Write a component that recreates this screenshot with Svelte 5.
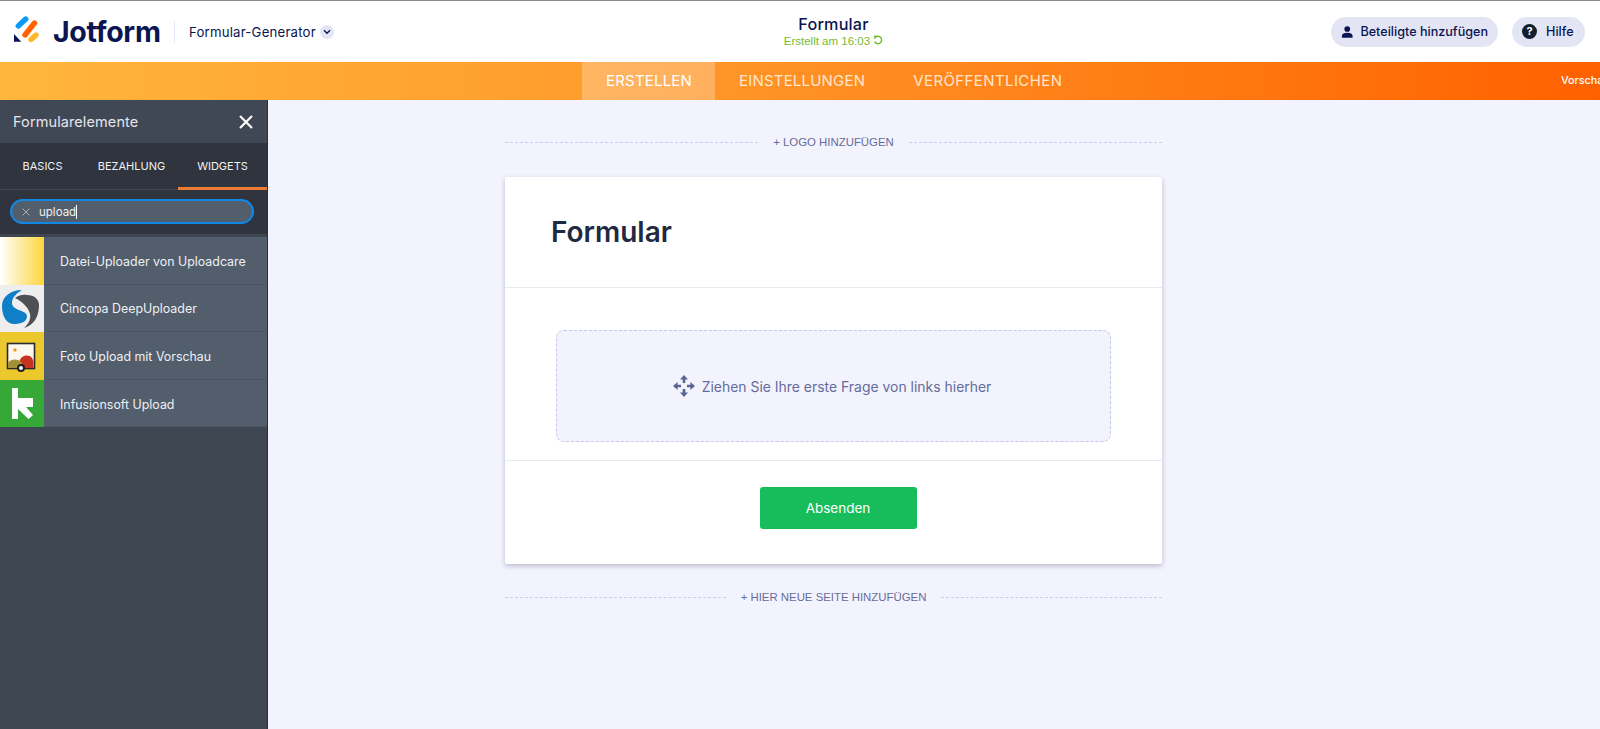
<script>
	const tabs = ['ERSTELLEN', 'EINSTELLUNGEN', 'VERÖFFENTLICHEN'];
	const sideTabs = ['BASICS', 'BEZAHLUNG', 'WIDGETS'];
	const widgets = [
		{ name: 'Datei-Uploader von Uploadcare', kind: 'care' },
		{ name: 'Cincopa DeepUploader', kind: 'cincopa' },
		{ name: 'Foto Upload mit Vorschau', kind: 'photo' },
		{ name: 'Infusionsoft Upload', kind: 'infusion' }
	];
</script>

<div class="page">
	<header class="top">
		<div class="brand">
			<svg class="logo" width="25" height="28" viewBox="0 0 25 28" fill="none" stroke-linecap="round" stroke-width="5.4">
				<line x1="4.3" y1="11" x2="11.7" y2="4" stroke="#0a9bf5" />
				<line x1="11" y1="20" x2="20.5" y2="8" stroke="#ff6100" />
				<line x1="17" y1="24.5" x2="22" y2="20" stroke="#ffb629" />
				<path d="M0 19 L7.3 26.7 H0 Z" fill="#0a1551" stroke="none" />
			</svg>
			<span class="wordmark">Jotform</span>
			<span class="divider"></span>
			<span class="generator">Formular-Generator</span>
			<span class="caret">
				<svg width="8" height="6" viewBox="0 0 8 6"><path d="M1 1.2 L4 4.2 L7 1.2" fill="none" stroke="#0a1551" stroke-width="1.4" /></svg>
			</span>
		</div>
		<div class="title">
			<div class="form-name">Formular</div>
			<div class="saved">
				Erstellt am 16:03
				<svg width="10" height="10" viewBox="0 0 10 10"><path d="M2.2 2.4 A3.7 3.7 0 1 1 1.6 6.6" fill="none" stroke="#78bb30" stroke-width="1.5" /><path d="M0.8 0.6 L4.6 1 L1.4 4.2 Z" fill="#78bb30" /></svg>
			</div>
		</div>
		<div class="actions">
			<button class="pill invite">
				<svg width="14" height="14" viewBox="0 0 14 14"><circle cx="7" cy="3.6" r="3.2" fill="#0a1551" /><path d="M1 13.5 V11.4 C1 9 3.4 7.8 7 7.8 S13 9 13 11.4 V13.5 Z" fill="#0a1551" /></svg>
				Beteiligte hinzufügen
			</button>
			<button class="pill help">
				<span class="qmark">?</span>
				Hilfe
			</button>
		</div>
	</header>

	<nav class="bar">
		{#each tabs as tab, i}
			<span class="bar-tab" class:active={i === 0}>{tab}</span>
		{/each}
		<span class="preview">Vorschau</span>
	</nav>

	<div class="body">
		<aside class="side">
			<div class="side-head">
				<span>Formularelemente</span>
				<svg width="14" height="14" viewBox="0 0 14 14"><path d="M1 1 L13 13 M13 1 L1 13" stroke="#fff" stroke-width="2.2" /></svg>
			</div>
			<div class="side-tabs">
				{#each sideTabs as tab, i}
					<span class="side-tab" class:current={i === 2}>{tab}</span>
				{/each}
			</div>
			<div class="search">
				<div class="search-box">
					<svg width="8" height="8" viewBox="0 0 8 8"><path d="M.5 .5 L7.5 7.5 M7.5 .5 L.5 7.5" stroke="#a4acb8" stroke-width="1" /></svg>
					<span class="query">upload</span>
				</div>
			</div>
			<ul class="list">
				{#each widgets as w}
					<li class="row">
						<span class="thumb {w.kind}">
							{#if w.kind === 'cincopa'}
								<svg width="44" height="47" viewBox="0 0 44 47">
									<path d="M22 5 C10 5 2 12 2 21 C2 32 7 39 14 39 C21 39 27 37 27 31 C27 25 12 26 12 18 C12 12 17 8 22 5 Z" fill="#0f7fc8" />
									<path d="M15 13 C19 10 23 9.5 27 10 C34 10 39 14 39 20 C39 30 35 40 24 43 C29 38 31 34 30 29 C28 22 23 17 15 13 Z" fill="#4e5053" />
								</svg>
							{:else if w.kind === 'photo'}
								<svg width="44" height="47" viewBox="0 0 44 47">
									<rect x="7.5" y="11.5" width="27" height="25" fill="#fdf8ef" stroke="#2a2a2a" stroke-width="1.6" />
									<circle cx="15" cy="18" r="1.7" fill="#f39a1d" />
									<path d="M19 36 V31 C20 25 24 23.5 27 23.5 C31 23.5 33.5 27 33.5 31 V36 Z" fill="#c6331f" />
									<path d="M8 36 V31 C10 27 18 26 22 31 V36 Z" fill="#a49037" />
									<circle cx="21" cy="36" r="3" fill="#fff" stroke="#1d1d1d" stroke-width="2" />
								</svg>
							{:else if w.kind === 'infusion'}
								<svg width="44" height="47" viewBox="0 0 44 47">
									<path d="M12 8 H18 V18 H33 V27 H26 L33 35 L28.5 39 L18 29 V39 H12 Z" fill="#fff" />
								</svg>
							{/if}
						</span>
						<span class="row-name">{w.name}</span>
					</li>
				{/each}
			</ul>
		</aside>

		<main class="canvas">
			<div class="sep logo-sep"><span>+ LOGO HINZUFÜGEN</span></div>
			<section class="card">
				<div class="card-head"><h1>Formular</h1></div>
				<div class="card-drop">
					<div class="drop">
						<svg width="22" height="22" viewBox="0 0 22 22" fill="#5b6294">
							<path d="M11 0 L15 4.6 H12.3 V8 H9.7 V4.6 H7 Z" />
							<path d="M11 22 L7 17.4 H9.7 V14 H12.3 V17.4 H15 Z" />
							<path d="M0 11 L4.6 7 V9.7 H8 V12.3 H4.6 V15 Z" />
							<path d="M22 11 L17.4 15 V12.3 H14 V9.7 H17.4 V7 Z" />
						</svg>
						<span>Ziehen Sie Ihre erste Frage von links hierher</span>
					</div>
				</div>
				<div class="card-foot"><button class="submit">Absenden</button></div>
			</section>
			<div class="sep page-sep"><span>+ HIER NEUE SEITE HINZUFÜGEN</span></div>
		</main>
	</div>
</div>

<style>
	:global(body) {
		margin: 0;
		font-family: Inter, 'Liberation Sans', sans-serif;
		overflow: hidden;
	}

	.page {
		width: 1600px;
		height: 729px;
		display: flex;
		flex-direction: column;
		overflow: hidden;
		background: #f3f3fe;
	}

	.top {
		height: 61px;
		flex: none;
		border-top: 1px solid #8a8a8a;
		background: #fff;
		display: grid;
		grid-template-columns: 1fr auto 1fr;
		align-items: center;
		padding: 0 15px 0 14px;
	}

	.brand {
		display: flex;
		align-items: center;
	}

	.logo {
		margin: 0 14px 5px 0;
	}

	.wordmark {
		font-size: 28.5px;
		font-weight: 700;
		letter-spacing: -0.3px;
		color: #0a1551;
		width: 107px;
		white-space: nowrap;
	}

	.divider {
		width: 1px;
		height: 22px;
		background: #e3e5f3;
		margin: 0 14px 0 14px;
	}

	.generator {
		font-size: 13.2px;
		color: #0a1551;
		letter-spacing: 0.2px;
	}

	.caret {
		width: 14px;
		height: 14px;
		border-radius: 50%;
		background: #e3e5f5;
		margin-left: 4px;
		display: flex;
		align-items: center;
		justify-content: center;
	}

	.title {
		text-align: center;
		transform: translateX(34px);
	}

	.form-name {
		font-size: 16.2px;
		font-weight: 500;
		letter-spacing: 0.2px;
		color: #0a1551;
		line-height: 20px;
	}

	.saved {
		font-family: 'Liberation Sans', Arial, sans-serif;
		font-size: 11.5px;
		color: #78bb30;
		line-height: 15px;
	}

	.actions {
		display: flex;
		justify-content: flex-end;
		gap: 14px;
	}

	.pill {
		height: 30px;
		border: 0;
		border-radius: 15px;
		background: #e3e5f5;
		color: #0a1551;
		font: 500 12.6px Inter, sans-serif;
		display: flex;
		align-items: center;
		gap: 7px;
		padding: 0 10px;
		white-space: nowrap;
	}

	.invite {
		width: 167px;
		justify-content: center;
	}

	.help {
		width: 73px;
		gap: 9px;
	}

	.qmark {
		width: 15px;
		height: 15px;
		border-radius: 50%;
		background: #141e2f;
		color: #fff;
		font-size: 11px;
		font-weight: 700;
		line-height: 15px;
		text-align: center;
	}

	.bar {
		height: 38px;
		flex: none;
		display: flex;
		padding-left: 582px;
		background: linear-gradient(90deg, #ffb63c 0%, #ff9a2b 40%, #ff6100 100%);
		overflow: hidden;
	}

	.bar-tab {
		padding: 0 24px;
		line-height: 38px;
		font-size: 15px;
		color: #ffe6cc;
		letter-spacing: 0.2px;
	}

	.bar-tab.active {
		background: rgba(255, 255, 255, 0.25);
		color: #fff;
		width: 133px;
		box-sizing: border-box;
	}

	.bar-tab:nth-child(3) {
		letter-spacing: 0.4px;
	}

	.preview {
		margin-left: auto;
		width: 39px;
		flex: none;
		overflow: hidden;
		white-space: nowrap;
		color: #fff;
		font-size: 10.8px;
		font-weight: 500;
		line-height: 38px;
	}

	.body {
		flex: 1;
		display: flex;
		min-height: 0;
	}

	.side {
		width: 268px;
		flex: none;
		background: #3e4652;
		border-right: 1px solid #2b3038;
		box-sizing: border-box;
		color: #fff;
	}

	.side-head {
		height: 43px;
		display: flex;
		align-items: center;
		justify-content: space-between;
		padding: 0 14px 0 13px;
		font-size: 14.5px;
		color: #e4e6ea;
		background: #414855;
		letter-spacing: 0.1px;
	}

	.side-tabs {
		height: 47px;
		display: grid;
		grid-template-columns: 85px 93px 1fr;
		background: #2f343e;
		box-sizing: border-box;
		border-bottom: 1px solid #414855;
	}

	.side-tab {
		font-size: 11px;
		line-height: 47px;
		text-align: center;
		color: #f2f2f2;
		height: 47px;
		box-sizing: border-box;
	}

	.side-tab.current {
		border-bottom: 3px solid #ee7b34;
	}

	.search {
		height: 44px;
		background: #2f343e;
		padding: 9px 13px 0 10px;
		box-sizing: border-box;
	}

	.search-box {
		height: 25px;
		border: 2px solid #0f88e6;
		border-radius: 13px;
		background: #535e6d;
		box-sizing: border-box;
		display: flex;
		align-items: center;
		padding-left: 10px;
		gap: 9px;
	}

	.query {
		font-size: 11.5px;
		color: #f0f0f0;
		border-right: 1px solid #fff;
		line-height: 14px;
	}

	.list {
		list-style: none;
		margin: 3px 0 0;
		padding: 0;
	}

	.row {
		height: 47.6px;
		background: #535e6d;
		display: flex;
		align-items: center;
		box-shadow: inset 0 -1px 0 #4b5563;
	}

	.thumb {
		width: 44px;
		height: 100%;
		flex: none;
		overflow: hidden;
	}

	.thumb svg {
		display: block;
	}

	.care {
		background: linear-gradient(90deg, #fff 0%, #fdd63c 100%);
	}

	.cincopa {
		background: #eeeeee;
	}

	.photo {
		background: #edc82d;
	}

	.infusion {
		background: #36a838;
	}

	.row-name {
		margin-left: 16px;
		padding-top: 1px;
		font-size: 12.4px;
		color: #eef0f2;
	}

	.canvas {
		width: 657px;
		margin-left: 237px;
		flex: none;
		padding-top: 34px;
	}

	.sep {
		height: 16px;
		display: flex;
		align-items: center;
		gap: 15px;
		color: #666c9a;
		font-family: 'Liberation Sans', Arial, sans-serif;
		font-size: 11.4px;
	}

	.sep::before,
	.sep::after {
		content: '';
		flex: 1;
		border-top: 1px dashed #c8ceef;
	}

	.logo-sep {
		margin-bottom: 27px;
	}

	.card {
		background: #fff;
		box-shadow: 0 2px 5px rgba(40, 44, 70, 0.28);
		border-radius: 2px;
	}

	.card-head {
		height: 111px;
		border-bottom: 1px solid #e6e8f2;
		box-sizing: border-box;
		display: flex;
		align-items: center;
		padding-left: 46px;
	}

	h1 {
		margin: 0 0 1px;
		font-size: 28px;
		font-weight: 600;
		color: #1f2942;
	}

	.card-drop {
		height: 173px;
		box-sizing: border-box;
		border-bottom: 1px solid #e6e8f2;
		padding: 42px 51px 0;
	}

	.drop {
		height: 112px;
		box-sizing: border-box;
		border: 1px dashed #c3c8ee;
		border-radius: 8px;
		background: #f3f3fe;
		display: flex;
		align-items: center;
		justify-content: center;
		gap: 7px;
		padding-right: 3px;
		font-size: 13.95px;
		color: #666c9a;
	}

	.card-foot {
		height: 103px;
		display: flex;
		justify-content: center;
		padding: 26px 0 0 9px;
		box-sizing: border-box;
	}

	.submit {
		width: 157px;
		height: 42px;
		border: 0;
		border-radius: 3px;
		background: #18bd5b;
		color: #fff;
		font: 400 13.5px Inter, sans-serif;
	}

	.page-sep {
		margin-top: 25px;
	}
</style>
